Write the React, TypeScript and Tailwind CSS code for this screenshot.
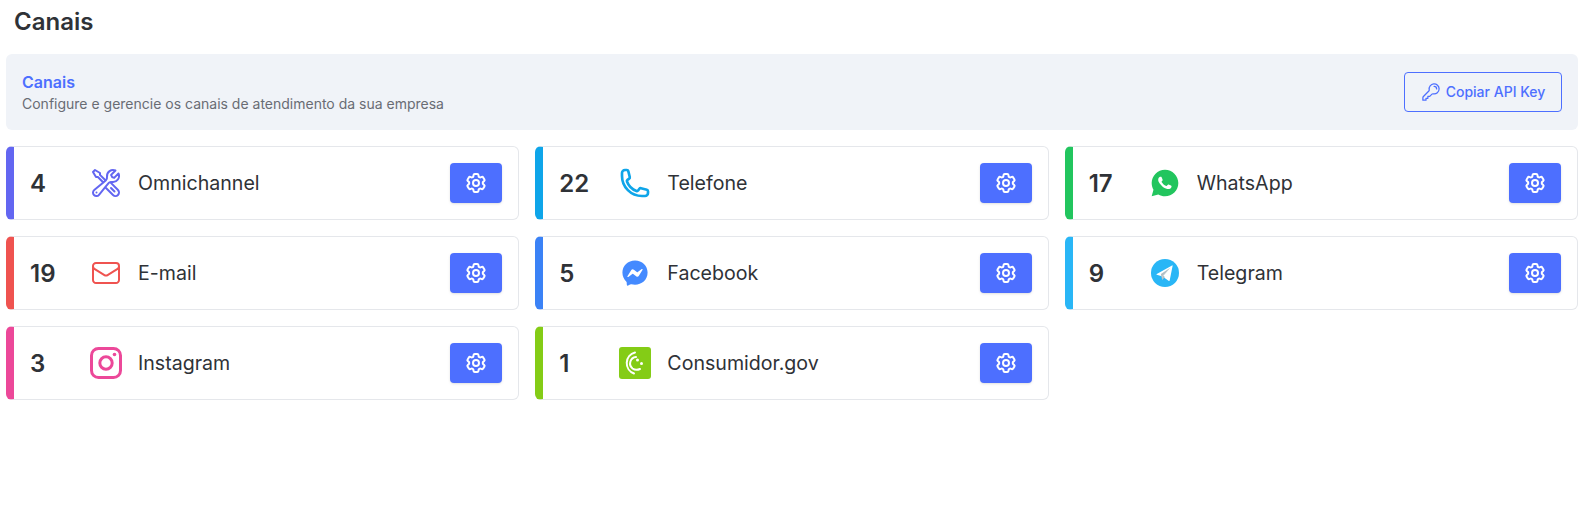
import React from 'react';
import {
  HiOutlineCog6Tooth,
  HiOutlineEnvelope,
  HiOutlineKey,
  HiOutlinePhone,
  HiOutlineWrenchScrewdriver,
} from 'react-icons/hi2';
import { FaFacebookMessenger } from 'react-icons/fa';
import { RiWhatsappFill } from 'react-icons/ri';

const TelegramIcon = () => (
  <svg viewBox="0 0 48 48" className="h-7 w-7">
    <circle cx="24" cy="24" r="24" fill="#29b6f6" />
    <path d="M37 12 32 37c-.1.6-.8.9-1.300.6L21 31l-4-2-7-2c-.8-.2-.8-1.200-.1-1.500L36 11c.7-.3 1.200.3 1 1Z" fill="#ffffff" />
    <path d="M33 15 17 25.500l2 10c.1.4.500.4.700.1L24 31l-3-2.500L33 15Z" fill="#b0bec5" />
    <path d="m21 28.500-2 7 .5-6.500L33 15 21 28.500Z" fill="#cfd8dc" />
  </svg>
);

const InstagramIcon = () => (
  <svg viewBox="0 0 32 32" className="h-8 w-8" fill="none" stroke="#ec4899" strokeWidth="3">
    <rect x="1.500" y="1.500" width="29" height="29" rx="7" />
    <circle cx="16" cy="16" r="6.200" />
    <circle cx="24.500" cy="7.500" r="1.800" fill="#ec4899" stroke="none" />
  </svg>
);

const ConsumidorIcon = () => (
  <span className="flex h-8 w-8 items-center justify-center rounded-[3px] bg-[#84cc16]">
    <svg viewBox="0 0 32 32" className="h-8 w-8" fill="none" stroke="#ffffff" strokeLinecap="round">
      <path d="M16 5.500a11 11 0 0 0-1 21" strokeWidth="2" />
      <path d="M17 10a6.500 6.500 0 0 0-3.500 11.500c2 1.500 5 1.600 7.500.5" strokeWidth="2" />
      <circle cx="18.500" cy="13" r="1.500" fill="#ffffff" stroke="none" />
      <circle cx="22.500" cy="16.500" r="1.500" fill="#ffffff" stroke="none" />
    </svg>
  </span>
);

const channels = [
  { count: 4, label: 'Omnichannel', bar: 'border-l-[#6366f1]', icon: <HiOutlineWrenchScrewdriver className="h-8 w-8 text-[#6366f1]" /> },
  { count: 22, label: 'Telefone', bar: 'border-l-[#0ea5e9]', icon: <HiOutlinePhone className="h-8 w-8 text-[#0ea5e9] stroke-2" /> },
  { count: 17, label: 'WhatsApp', bar: 'border-l-[#22c55e]', icon: <RiWhatsappFill className="h-8 w-8 text-[#22c55e]" /> },
  { count: 19, label: 'E-mail', bar: 'border-l-[#ef5350]', icon: <HiOutlineEnvelope className="h-8 w-8 text-[#ef5350]" /> },
  { count: 5, label: 'Facebook', bar: 'border-l-[#3b82f6]', icon: <FaFacebookMessenger className="h-[26px] w-[26px] text-[#448aff]" /> },
  { count: 9, label: 'Telegram', bar: 'border-l-[#29b6f6]', icon: <TelegramIcon /> },
  { count: 3, label: 'Instagram', bar: 'border-l-[#ec4899]', icon: <InstagramIcon /> },
  { count: 1, label: 'Consumidor.gov', bar: 'border-l-[#84cc16]', icon: <ConsumidorIcon /> },
];

const ChannelCard: React.FC<{
  count: number;
  label: string;
  bar: string;
  icon: React.ReactNode;
}> = ({ count, label, bar, icon }) => (
  <div className={`flex h-[74px] items-center rounded-md border border-l-8 border-[#e5e7eb] bg-white pr-4 pl-4 ${bar}`}>
    <span className="w-[60px] pt-0.5 text-2xl font-semibold text-[#2f3237]">{count}</span>
    <span className="flex w-[32px] justify-center">{icon}</span>
    <span className="ml-4 flex-1 pt-0.5 text-[19.6px] text-[#2f3237]">{label}</span>
    <button className="flex h-10 w-[52px] items-center justify-center rounded bg-[#4d6fff] shadow-sm">
      <HiOutlineCog6Tooth className="h-6 w-6 stroke-2 text-white" />
    </button>
  </div>
);

export default function App() {
  return (
    <div className="min-h-[521px] bg-white pr-[7px] pl-1.5 font-['Inter',sans-serif]">
      <h1 className="px-2 pt-[6px] pb-[16px] text-2xl leading-8 font-semibold text-[#2f3237]">Canais</h1>
      <div className="flex h-[76px] items-center justify-between rounded-md bg-[#f0f3f8] px-4">
        <div className="pt-0.5">
          <h2 className="mb-0.5 text-base leading-5 font-semibold text-[#4d6fff]">Canais</h2>
          <p className="text-sm leading-5 text-[#696c74]">Configure e gerencie os canais de atendimento da sua empresa</p>
        </div>
        <button className="flex h-10 w-[158px] items-center justify-center gap-[5px] rounded border border-[#4d6fff] text-sm font-medium text-[#4d6fff]">
          <HiOutlineKey className="h-5 w-5" />
          Copiar API Key
        </button>
      </div>
      <div className="mt-4 grid grid-cols-3 gap-4">
        {channels.map((c) => (
          <ChannelCard key={c.label} {...c} />
        ))}
      </div>
    </div>
  );
}
